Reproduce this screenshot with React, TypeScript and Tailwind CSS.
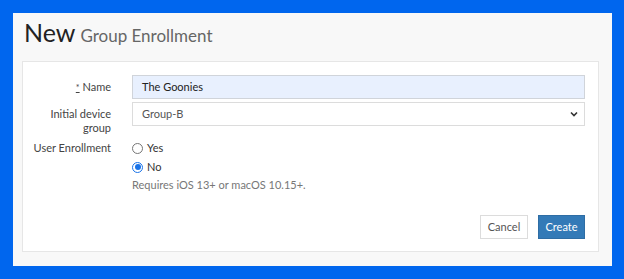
import React from "react";

export default function App() {
  return (
    <div className="w-[624px] h-[279px] bg-[#0066ee] pt-[13px] pl-[13px] pr-[12px] pb-[13px]" style={{ fontFamily: "Lato, 'Open Sans', sans-serif" }}>
      <div className="h-full bg-[#f8f8f8] pl-[9px] pr-[13px] flex flex-col">
        <div className="h-[48px] pt-[4px] pl-[2px] flex items-baseline">
          <span className="text-[25px] leading-[30px] font-normal text-[#222]">New</span>
          <span className="text-[17px] leading-[30px] text-[#666] ml-[5px]">Group Enrollment</span>
        </div>
        <div className="bg-white border border-[#e6e6e6] h-[191px] pt-[13px] pr-[13px] flex flex-col">
          <div className="flex">
            <div className="w-[88px] text-right text-[11px] leading-[24px] text-[#444]">
              <span className="underline text-[#444] text-[9px]">*</span> Name
            </div>
            <div className="ml-[21px] flex-1 h-[24px] bg-[#e8f0fe] border border-[#d0d4da] pl-[9px] text-[11px] leading-[22px] text-[#222]">
              The Goonies
            </div>
          </div>
          <div className="flex mt-[2px]">
            <div className="w-[88px] pl-[20px] text-right text-[11px] leading-[14px] pt-[5px] text-[#444]">
              Initial device group
            </div>
            <div className="ml-[21px] flex-1 h-[24px] bg-white border border-[#dcdcdc] pl-[9px] pr-[6px] text-[11px] leading-[22px] text-[#555] flex items-center justify-between">
              <span>Group-B</span>
              <svg width="8" height="6" viewBox="0 0 8 6"><path d="M1 1.5 L4 4.5 L7 1.5" stroke="#333" strokeWidth="1.6" fill="none" /></svg>
            </div>
          </div>
          <div className="flex mt-[6px]">
            <div className="w-[88px] text-right text-[11px] leading-[14px] text-[#444]">User Enrollment</div>
            <div className="ml-[21px] flex flex-col text-[11px] text-[#333]">
              <div className="flex items-center h-[14px]">
                <span className="w-[11px] h-[11px] rounded-full border border-[#767676] bg-white" />
                <span className="ml-[4px]">Yes</span>
              </div>
              <div className="flex items-center h-[14px] mt-[5px]">
                <span className="w-[11px] h-[11px] rounded-full border border-[#1a73e8] bg-white flex items-center justify-center">
                  <span className="w-[6px] h-[6px] rounded-full bg-[#1a73e8]" />
                </span>
                <span className="ml-[4px]">No</span>
              </div>
              <div className="mt-[4px] leading-[14px] text-[#777]">Requires iOS 13+ or macOS 10.15+.</div>
            </div>
          </div>
          <div className="mt-auto mb-[12px] flex justify-end gap-[10px]">
            <div className="w-[48px] h-[24px] border border-[#dcdcdc] bg-white text-[11px] text-[#555] flex items-center justify-center">Cancel</div>
            <div className="w-[47px] h-[24px] bg-[#337ab7] border border-[#2e6da4] text-[11px] text-white flex items-center justify-center">Create</div>
          </div>
        </div>
      </div>
    </div>
  );
}
